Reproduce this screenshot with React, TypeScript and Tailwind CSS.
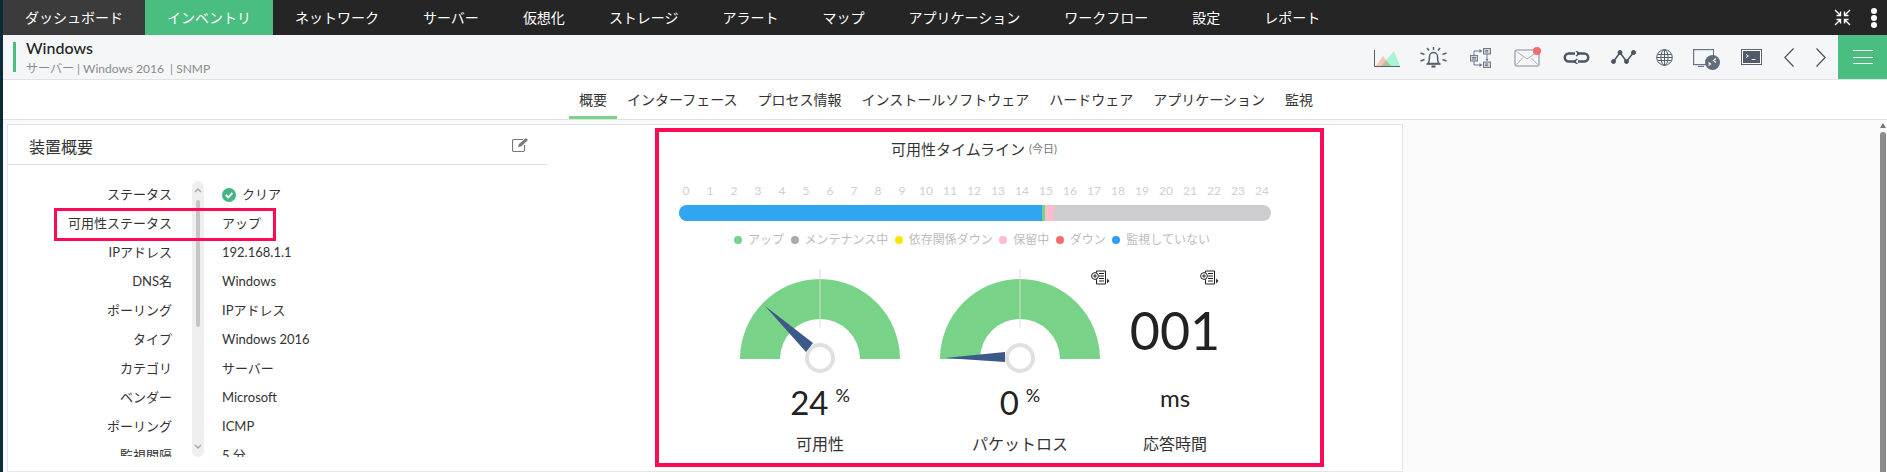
import React from "react";

const FONT = "font-['Lato','Noto_Sans_CJK_JP',sans-serif]";
const navItems: [string, string][] = [
  ["ダッシュボード", "bg-[#3b3b3b]"],
  ["インベントリ", "bg-[#4abd80]"],
  ["ネットワーク", ""],
  ["サーバー", ""],
  ["仮想化", ""],
  ["ストレージ", ""],
  ["アラート", ""],
  ["マップ", ""],
  ["アプリケーション", ""],
  ["ワークフロー", ""],
  ["設定", ""],
  ["レポート", ""],
];
const tabs: [string, string][] = [
  ["概要", "border-[#78d288]"],
  ["インターフェース", "border-transparent"],
  ["プロセス情報", "border-transparent"],
  ["インストールソフトウェア", "border-transparent"],
  ["ハードウェア", "border-transparent"],
  ["アプリケーション", "border-transparent"],
  ["監視", "border-transparent"],
];
const rows: [string, React.ReactNode][] = [
  ["ステータス", "クリア"],
  ["可用性ステータス", "アップ"],
  ["IPアドレス", "192.168.1.1"],
  ["DNS名", "Windows"],
  ["ポーリング", "IPアドレス"],
  ["タイプ", "Windows 2016"],
  ["カテゴリ", "サーバー"],
  ["ベンダー", "Microsoft"],
  ["ポーリング", "ICMP"],
  ["監視間隔", "5 分"],
];
const legend: [string, string][] = [
  ["アップ", "bg-[#78d288]"],
  ["メンテナンス中", "bg-[#aaaaaa]"],
  ["依存関係ダウン", "bg-[#ffe600]"],
  ["保留中", "bg-[#ffbccb]"],
  ["ダウン", "bg-[#f56c6c]"],
  ["監視していない", "bg-[#2f9ff0]"],
];

function Gauge({ needle }: { needle: string }) {
  return (
    <svg width="160" height="105" viewBox="0 0 160 105" className="block">
      <path d="M0 90 A80 80 0 0 1 160 90 H120 A40 40 0 0 0 40 90 Z" fill="#78d288" />
      <path d="M80 0 V59" stroke="#dcdcdc" strokeWidth="1" />
      <circle cx="80" cy="89" r="13" fill="#fff" stroke="#e0e0e0" strokeWidth="4" />
      <polygon points={needle} fill="#3b5a8a" />
    </svg>
  );
}

function ReportIcon() {
  return (
    <svg width="19" height="15" viewBox="0 0 19 15" className="block">
      <path d="M5.500 1h9v13h-9z" fill="#fff" stroke="#222" />
      <path d="M8 3.500h5M8 6h5M8 8.500h5M8 11h5" stroke="#222" />
      <circle cx="4" cy="6" r="3.400" fill="#fff" stroke="#222" />
      <path d="M2.200 6h3.600M4 4.200v3.600" stroke="#222" />
      <path d="M16 8.500l2.500 2.500-2.500 2.500z" fill="#333" />
    </svg>
  );
}

function ToolIcons() {
  const s = "#566070";
  return (
    <div className="flex items-start h-full">
      <svg width="26" height="17" viewBox="0 0 26 17" className="mt-[15px]">
        <path d="M.5 0v16.500H26" fill="none" stroke="#555e6c" />
        <path d="M2 16 L9 6 L17 16Z" fill="#ffc5ae" />
        <path d="M7 16 L20 1 L26 16Z" fill="#a9f5d6" />
        <path d="M7 16 L12 10 L17 16Z" fill="#a9c79a" />
      </svg>
      <svg width="27" height="21" viewBox="0 0 27 21" className="ml-[20px] mt-[12px]" fill="none" stroke={s} strokeWidth="1.500">
        <path d="M8 16.500c1.500-2 1.500-4 1.500-7a4 4 0 0 1 8 0c0 3 0 5 1.500 7z" />
        <path d="M6.500 17h14" strokeWidth="1.600" />
        <path d="M11.500 19.500h4" strokeWidth="2.200" />
        <path d="M7 1l2 2.500M20 1l-2 2.500M13.500 0v3M.5 6l4 1.500M26.500 6l-4 1.500M.5 14l4-1.500M26.500 14l-4-1.500" />
      </svg>
      <svg width="21" height="20" viewBox="0 0 21 20" className="ml-[23px] mt-[13px]" fill="none" stroke="#717a87">
        <rect x="13.500" y=".5" width="7" height="5.500" fill="#d2d5d9" />
        <rect x="13.500" y="14" width="7" height="5.500" fill="#d2d5d9" />
        <rect x=".5" y="7.500" width="7" height="5.500" fill="#d2d5d9" />
        <path d="M15 2.500h3M15 4h3M15 16h3M15 17.500h3M2 9.500h4M2 11h4" />
        <path d="M4 7.500V3h6M4 13v4h6M17 6v6" />
        <path d="M9.500 1l3 2-3 2zM9.500 15l3 2-3 2zM15.500 11h3L17 13.500z" fill="#717a87" stroke="none" />
      </svg>
      <div className="relative ml-[23px] mt-[12px] w-[26px] h-[20px]">
        <svg width="26" height="20" viewBox="0 0 26 20" fill="none" stroke="#aab0b8" strokeWidth="1.600" className="block">
          <rect x="1" y="3" width="24" height="16" rx="2" />
          <path d="M2.500 4.500l10.500 7.500L23.500 4.500M2.500 17.500l6.500-7M23.500 17.500l-6.500-7" strokeWidth="1" />
        </svg>
        <span className="absolute right-[-1px] top-0 w-[8px] h-[8px] rounded-full bg-[#f56c6c]" />
      </div>
      <svg width="27" height="13" viewBox="0 0 27 13" className="ml-[23px] mt-[16px]" fill="none" stroke="#4b5563" strokeWidth="2.500">
        <path d="M12 2.500H5.800a4 4 0 0 0 0 8H13M15 10.500h6.200a4 4 0 0 0 0-8H14" />
        <path d="M13 0l3.500 2.500L13 5M14.500 8L11 10.500l3.500 2.500" strokeWidth="1.500" />
      </svg>
      <svg width="25" height="14" viewBox="0 0 25 14" className="ml-[21px] mt-[15px]" fill="#4b5563" stroke="#4b5563">
        <path d="M2.500 11.500L9 2.500l6.500 9L22.500 2.500" fill="none" strokeWidth="1.600" />
        <circle cx="2.500" cy="11.500" r="2" />
        <circle cx="9" cy="2.500" r="2" />
        <circle cx="15.500" cy="11.500" r="2" />
        <circle cx="22.500" cy="2.500" r="2" />
      </svg>
      <svg width="17" height="17" viewBox="0 0 17 17" className="ml-[20px] mt-[14px]" fill="none" stroke={s}>
        <circle cx="8.500" cy="8.500" r="7.800" />
        <ellipse cx="8.500" cy="8.500" rx="3.600" ry="7.800" />
        <path d="M8.500 .7v15.600M1.500 5.500h14M1.500 11.500h14M.7 8.500h15.600" />
      </svg>
      <div className="relative ml-[20px] mt-[14px] w-[27px] h-[22px]">
        <svg width="21" height="18" viewBox="0 0 21 18" fill="none" stroke="#6b7482" strokeWidth="1.200" className="block">
          <rect x=".6" y=".6" width="20" height="15" />
          <path d="M5 17.500h6" />
        </svg>
        <svg width="15" height="15" viewBox="0 0 15 15" className="absolute left-[12px] top-[6px]">
          <circle cx="7.500" cy="7.500" r="7.500" fill="#626b78" />
          <path d="M3.500 7.500l2 1.500-2 1.500M11 3.500L8.500 5.500l2.500 2" fill="none" stroke="#fff" strokeWidth="1.200" />
        </svg>
      </div>
      <div className="ml-[21px] mt-[14px] w-[21px] h-[16px] border border-[#5a6372] bg-white p-[1px]">
        <div className="w-full h-full bg-[#515a69] flex items-center pl-[3px]">
          <svg width="11" height="8" viewBox="0 0 11 8" fill="none" stroke="#fff" strokeWidth=".9">
            <path d="M0 1.500l2.500 1.500L0 4.500M5.500 6.500h4" />
          </svg>
        </div>
      </div>
      <svg width="10" height="19" viewBox="0 0 10 19" className="ml-[22px] mt-[13px]" fill="none" stroke="#4b5058" strokeWidth="1.200">
        <path d="M9.500 .5L.8 9.500l8.700 9" />
      </svg>
      <svg width="10" height="19" viewBox="0 0 10 19" className="ml-[22px] mt-[13px]" fill="none" stroke="#4b5058" strokeWidth="1.200">
        <path d="M.5 .5L9.200 9.500l-8.700 9" />
      </svg>
    </div>
  );
}

export default function App() {
  return (
    <div className={`${FONT} relative w-[1887px] h-[472px] overflow-hidden bg-white pl-[3px] text-[#222]`}>
      <div className="absolute left-0 top-0 w-[3px] h-full bg-[#0b2b3b]" />
      <header className="flex h-[35px] bg-[#252525] text-white text-[14px]">
        {navItems.map(([t, c]) => (
          <div key={t} className={`flex items-center px-[22px] whitespace-nowrap ${c}`}>{t}</div>
        ))}
        <div className="ml-auto flex items-center pr-[10px]">
          <svg width="17" height="17" viewBox="0 0 17 17" fill="none" stroke="#fff" strokeWidth="1.400">
            <path d="M1 1l5 5M6.500 2.500v4h-4M16 1l-5 5M10.500 2.500v4h4M1 16l5-5M6.500 14.500v-4h-4M16 16l-5-5M10.500 14.500v-4h4" />
          </svg>
          <div className="ml-[20px] flex flex-col gap-[1px]">
            <span className="w-[6px] h-[6px] rounded-full bg-white" />
            <span className="w-[6px] h-[6px] rounded-full bg-white" />
            <span className="w-[6px] h-[6px] rounded-full bg-white" />
          </div>
        </div>
      </header>

      <div className="flex h-[45px] bg-[#f4f6f8] border-b border-[#e2e2e2]">
        <div className="ml-[10px] mt-[7px] h-[30px] w-[3px] bg-[#4abd80]" />
        <div className="ml-[10px] mt-[4px]">
          <div className="text-[16px] leading-[18px] font-medium text-[#222]">Windows</div>
          <div className="text-[12px] leading-[14px] mt-[5px] text-[#8b8b8b] whitespace-nowrap">サーバー | Windows 2016 &nbsp;| SNMP</div>
        </div>
        <div className="ml-auto flex h-full">
          <ToolIcons />
          <div className="ml-[12px] w-[49px] h-full bg-[#4abd80] flex flex-col items-center justify-center gap-[5.500px]">
            <span className="w-[20px] h-px bg-white" />
            <span className="w-[20px] h-px bg-white" />
            <span className="w-[20px] h-px bg-white" />
          </div>
        </div>
      </div>

      <nav className="flex h-[40px] border-b border-[#e2e2e2] pl-[566px] text-[14px] text-[#333]">
        {tabs.map(([t, c]) => (
          <div key={t} className={`flex items-center whitespace-nowrap h-[39px] border-b-[3px] pt-[3px] px-[10px] ${c}`}>{t}</div>
        ))}
      </nav>

      <main className="h-[352px] bg-[#fafafa] pl-[4px] pt-[4px]">
        <div className="flex w-[1396px] h-[348px] border border-[#e4e4e4] bg-white">
          <section className="w-[540px] shrink-0">
            <div className="relative flex items-center h-[40px] border-b border-[#e2e2e2] pl-[21px] pt-[4px] text-[16px] text-[#333]">
              装置概要
              <svg width="17" height="15" viewBox="0 0 17 15" className="absolute left-[504px] top-[12px]" fill="none" stroke="#777" strokeWidth="1.100">
                <path d="M11 2.500H2a1.500 1.500 0 0 0-1.500 1.500v9a1.500 1.500 0 0 0 1.500 1.500h9a1.500 1.500 0 0 0 1.500-1.500V8" />
                <path d="M6 10l1-3 7-6 2 2-7 6.500z" fill="#777" stroke="none" />
              </svg>
            </div>
            <div className="relative mt-[15px] h-[277px] overflow-hidden">
              {rows.map(([k, v], i) => (
                <div key={i} className="flex h-[29px] items-center text-[13px] text-[#333]">
                  <div className="w-[164px] text-right whitespace-nowrap">{k}</div>
                  <div className="ml-[50px] flex items-center gap-[6px] whitespace-nowrap">
                    {i === 0 && (
                      <svg width="14" height="14" viewBox="0 0 14 14">
                        <circle cx="7" cy="7" r="7" fill="#44b583" />
                        <path d="M3.800 7l2.400 2.400 4.200-4.400" fill="none" stroke="#fff" strokeWidth="1.900" />
                      </svg>
                    )}
                    {v}
                  </div>
                </div>
              ))}
              <div className="absolute left-[184px] top-[1px] w-[12px] h-[276px] rounded-[6px] bg-[#efefef]">
                <svg width="12" height="8" viewBox="0 0 12 8" className="absolute top-[5px]" fill="none" stroke="#aaa" strokeWidth="1.500">
                  <path d="M3 6l3-3 3 3" />
                </svg>
                <div className="absolute left-[4px] top-[19px] w-[4px] h-[127px] rounded-[2px] bg-[#c4c4c4]" />
                <svg width="12" height="8" viewBox="0 0 12 8" className="absolute bottom-[6px]" fill="none" stroke="#aaa" strokeWidth="1.500">
                  <path d="M3 2l3 3 3-3" />
                </svg>
              </div>
            </div>
          </section>

          <section className="ml-[107px] mt-[3px] w-[669px] h-[339px] shrink-0 flex flex-col border-[4px] border-[#ff0b55]">
            <div className="mt-[7px] h-[20px] w-[630px] flex items-center justify-center text-[15px] text-[#333]">
              可用性タイムライン
              <span className="ml-[4px] text-[11px] text-[#777]">(今日)</span>
            </div>
            <div className="mt-[25px] ml-[15px] flex text-[12px] leading-[14px] text-[#cfcfcf]">
              {Array.from({ length: 25 }, (_, i) => (
                <span key={i} className="w-[24px] shrink-0 text-center">{i}</span>
              ))}
            </div>
            <div className="ml-[20px] mt-[7px] flex w-[592px] h-[16px] shrink-0 overflow-hidden rounded-[8px] bg-[#cdcdcf]">
              <div className="w-[363px] bg-[#32a5f0]" />
              <div className="w-[3px] bg-[#78d288]" />
              <div className="w-[9px] bg-[#ffbccb]" />
            </div>
            <div className="mt-[11px] ml-[75px] flex h-[16px] items-center text-[12px] text-[#bdbdbd]">
              {legend.map(([t, c]) => (
                <div key={t} className="flex items-center mr-[6.500px] whitespace-nowrap">
                  <span className={`w-[8px] h-[8px] rounded-full mr-[6px] ${c}`} />
                  {t}
                </div>
              ))}
            </div>
            <div className="flex mt-[21px] ml-[81px]">
              <div className="w-[160px] flex flex-col items-center">
                <Gauge needle="25,37 73,74 66,83" />
                <div className="flex mt-[6px] h-[44px] text-[33px] leading-[44px]">
                  24
                  <span className="ml-[7px] mt-[5px] text-[18px] leading-[20px]">%</span>
                </div>
                <div className="mt-[10px] text-[16px] leading-[20px] text-[#333]">可用性</div>
              </div>
              <div className="w-[160px] ml-[40px] flex flex-col items-center">
                <Gauge needle="5,89 65,83 65,93" />
                <div className="flex mt-[6px] h-[44px] text-[33px] leading-[44px]">
                  0
                  <span className="ml-[7px] mt-[5px] text-[18px] leading-[20px]">%</span>
                </div>
                <div className="mt-[10px] text-[16px] leading-[20px] text-[#333]">パケットロス</div>
              </div>
              <div className="w-[90px] ml-[30px] flex flex-col items-center">
                <div className="mt-[31px] h-[60px] text-[52px] leading-[60px]">001</div>
                <div className="mt-[16px] h-[44px] text-[24px] leading-[44px]">ms</div>
                <div className="mt-[14px] text-[16px] leading-[20px] text-[#333]">応答時間</div>
              </div>
            </div>
          </section>
        </div>
      </main>
      <div className="absolute left-[1091px] top-[270px]"><ReportIcon /></div>
      <div className="absolute left-[1200px] top-[270px]"><ReportIcon /></div>
      <div className="absolute left-[54px] top-[208px] w-[222px] h-[33px] border-[3px] border-[#ff0b55]" />
      <svg width="6" height="5" viewBox="0 0 6 5" className="absolute left-[1880px] top-[123px]"><path d="M3 0l3 5H0z" fill="#777" /></svg>
      <div className="absolute left-[1880px] top-[132px] w-[6px] h-[340px] rounded-t-[3px] bg-[#8c8c8c]" />
    </div>
  );
}
